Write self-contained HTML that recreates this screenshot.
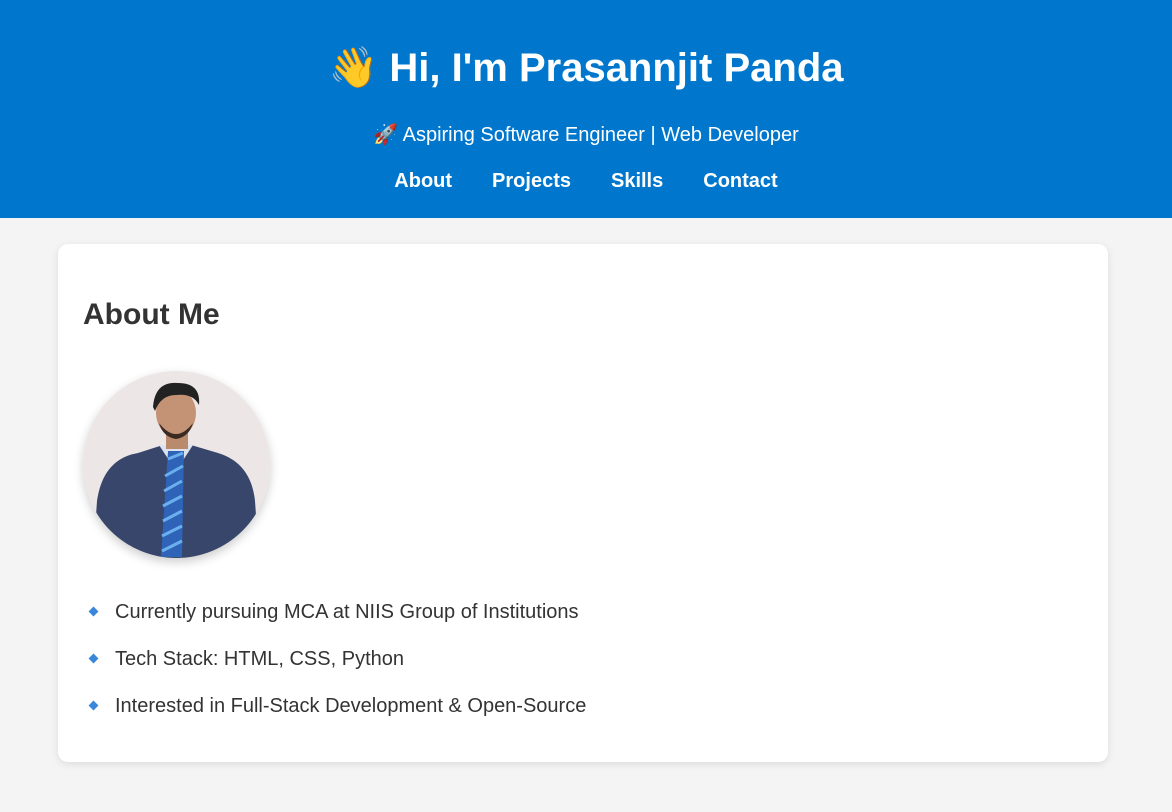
<!DOCTYPE html><html><head><meta charset="utf-8"><style>
body{margin:0;background:#f4f4f4;font-family:"Liberation Sans","DejaVu Sans",sans-serif;width:1172px;height:812px;overflow:hidden}
header{background:#0077cc;height:218px;color:#fff;text-align:center;position:relative}
h1{margin:0;position:absolute;top:44px;left:0;right:0;font-size:40px;font-weight:bold;letter-spacing:0}
.sub{position:absolute;top:122px;left:0;right:0;font-size:20px}
nav{position:absolute;top:170px;left:0;right:0;font-size:20px;font-weight:bold;word-spacing:0}
nav span{margin:0 20px}
.card{position:absolute;left:58px;top:244px;width:1050px;height:518px;background:#fff;border-radius:10px;box-shadow:0 2px 8px rgba(0,0,0,.1)}
h2{position:absolute;left:25px;top:54px;margin:0;font-size:30px;color:#333}
.photo{position:absolute;left:25px;top:127px;width:187px;height:187px;border-radius:50%;overflow:hidden;box-shadow:0 4px 10px rgba(0,0,0,.2)}
ul{position:absolute;left:32px;top:353px;margin:0;padding:0;list-style:none;color:#333;font-size:20px}
li{height:47px;line-height:30px}
li:before{content:"";display:inline-block;width:7px;height:7px;background:#3a86d8;transform:rotate(45deg);margin-right:18px;vertical-align:middle;position:relative;top:-1px}
</style></head><body>
<header><h1>👋 Hi, I'm Prasannjit Panda</h1><div class="sub">🚀 Aspiring Software Engineer | Web Developer</div>
<nav><span>About</span><span>Projects</span><span>Skills</span><span>Contact</span></nav></header>
<div class="card"><h2>About Me</h2>
<div class="photo"><svg width="187" height="187" viewBox="0 0 187 187">
<rect width="187" height="187" fill="#ede6e6"/>
<path d="M14 130 Q20 88 55 82 L80 74 L108 74 L135 82 Q168 92 172 130 L176 187 L10 187Z" fill="#37466a"/>
<path d="M76 74 L93 100 L110 74 Z" fill="#dde3ee"/>
<path d="M85 80 L101 80 L99 186 L78 186 Z" fill="#2f63b8"/>
<path d="M85 88 L100 82 M82 105 L100 95 M81 120 L99 110 M80 135 L99 125 M80 150 L99 140 M79 165 L99 155 M79 180 L99 170" stroke="#6ab0ee" stroke-width="3"/>
<rect x="83" y="58" width="22" height="20" fill="#b98a6c"/>
<ellipse cx="93" cy="42" rx="20" ry="24" fill="#c49274"/>
<path d="M70 36 Q72 10 95 12 Q118 12 116 34 Q110 22 93 24 Q78 24 72 40Z" fill="#222"/>
<path d="M76 52 Q93 74 110 52 Q106 66 93 68 Q80 66 76 52Z" fill="#3a2a22"/>
</svg></div>
<ul><li>Currently pursuing MCA at NIIS Group of Institutions</li><li>Tech Stack: HTML, CSS, Python</li><li>Interested in Full-Stack Development &amp; Open-Source</li></ul>
</div></body></html>
